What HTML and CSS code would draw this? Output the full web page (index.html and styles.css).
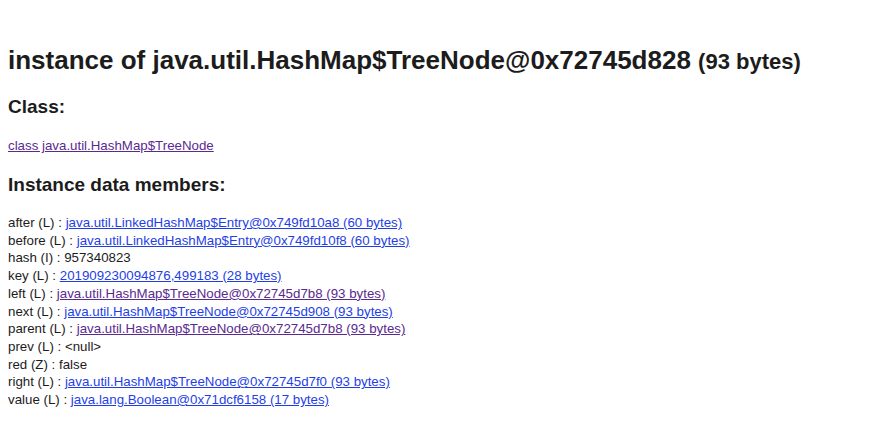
FILE: index.html
```html
<!DOCTYPE html>
<html>
<head>
<meta charset="utf-8">
<title>instance of java.util.HashMap$TreeNode@0x72745d828</title>
<link rel="stylesheet" href="styles.css">
</head>
<body>
<h1 class="title">instance of java.util.HashMap$TreeNode@0x72745d828 <span class="size">(93 bytes)</span></h1>
<h2 class="section class-head">Class:</h2>
<p class="class-link"><a class="visited" href="#">class java.util.HashMap$TreeNode</a></p>
<h2 class="section members-head">Instance data members:</h2>
<div class="members">
  <div class="row">after (L) : <a href="#">java.util.LinkedHashMap$Entry@0x749fd10a8 (60 bytes)</a></div>
  <div class="row">before (L) : <a href="#">java.util.LinkedHashMap$Entry@0x749fd10f8 (60 bytes)</a></div>
  <div class="row">hash (I) : 957340823</div>
  <div class="row">key (L) : <a href="#">201909230094876,499183 (28 bytes)</a></div>
  <div class="row">left (L) : <a class="visited" href="#">java.util.HashMap$TreeNode@0x72745d7b8 (93 bytes)</a></div>
  <div class="row">next (L) : <a href="#">java.util.HashMap$TreeNode@0x72745d908 (93 bytes)</a></div>
  <div class="row">parent (L) : <a class="visited" href="#">java.util.HashMap$TreeNode@0x72745d7b8 (93 bytes)</a></div>
  <div class="row">prev (L) : &lt;null&gt;</div>
  <div class="row">red (Z) : false</div>
  <div class="row">right (L) : <a href="#">java.util.HashMap$TreeNode@0x72745d7f0 (93 bytes)</a></div>
  <div class="row">value (L) : <a href="#">java.lang.Boolean@0x71dcf6158 (17 bytes)</a></div>
</div>
</body>
</html>
```
FILE: styles.css
```css
html, body {
  background: #ffffff;
}
body {
  margin: 8px;
  font-family: "Liberation Sans", Arial, sans-serif;
  color: #1c1c1c;
}
a {
  color: #1f3fe6;
  text-decoration: underline;
}
a.visited {
  color: #5a2a90;
}
.title {
  margin: 37px 0 0 0;
  font-size: 26px;
  line-height: 30px;
  font-weight: bold;
}
.size {
  font-size: 22px;
}
.section {
  font-size: 19px;
  line-height: 22px;
  font-weight: bold;
  margin: 0;
}
.class-head {
  margin-top: 19px;
}
.class-link {
  margin: 19px 0 0 0;
  font-size: 13.3px;
  line-height: 18px;
}
.members-head {
  margin-top: 19px;
}
.members {
  margin-top: 18px;
  font-size: 13.3px;
  line-height: 17.7px;
}
```
